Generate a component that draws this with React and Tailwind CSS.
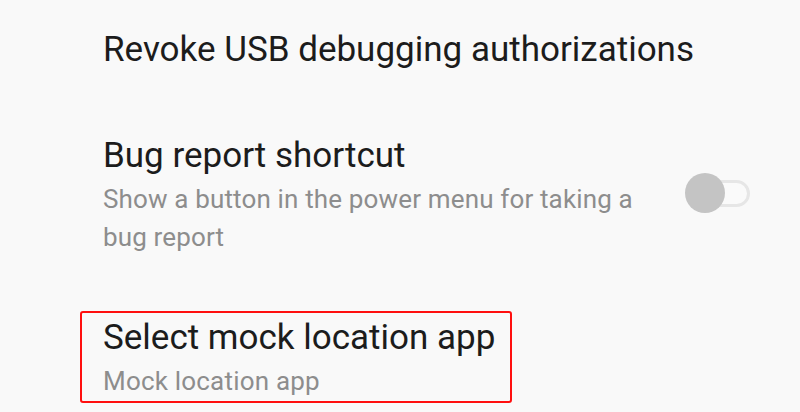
import React from 'react';

function Toggle() {
  return (
    <div className="relative w-[65px] h-[40px] shrink-0 mb-[6px]">
      <div className="absolute left-[16px] right-0 top-[7px] h-[27px] rounded-full border-[3px] border-[#e6e6e6] bg-[#fafafa]" />
      <div className="absolute left-0 top-0 w-[40px] h-[40px] rounded-full bg-[#c4c4c4]" />
    </div>
  );
}

export default function App() {
  return (
    <div
      className="w-[800px] h-[412px] overflow-hidden bg-[#f9f9f9]"
      style={{ fontFamily: 'Roboto, "Noto Sans", sans-serif' }}
    >
      <div className="pl-[103px] pt-[30px] text-[35px] leading-[40px] text-[#1c1c1c]">
        Revoke USB debugging authorizations
      </div>

      <div className="flex items-center pl-[103px] pr-[50px] mt-[66px]">
        <div className="flex-1">
          <div className="text-[35px] leading-[40px] text-[#1c1c1c]">Bug report shortcut</div>
          <div className="mt-[4px] w-[560px] text-[26px] leading-[38px] tracking-[0.15px] text-[#8d8d8d]">
            Show a button in the power menu for taking a bug report
          </div>
        </div>
        <Toggle />
      </div>

      <div className="ml-[80px] mt-[55px] w-[432px] h-[92px] rounded-[3px] border-2 border-[#ff0f0f] pl-[21px] pt-[5px]">
        <div className="text-[35px] leading-[40px] text-[#1c1c1c]">Select mock location app</div>
        <div className="mt-[4px] text-[26px] leading-[38px] tracking-[0.2px] text-[#8d8d8d]">Mock location app</div>
      </div>
    </div>
  );
}
